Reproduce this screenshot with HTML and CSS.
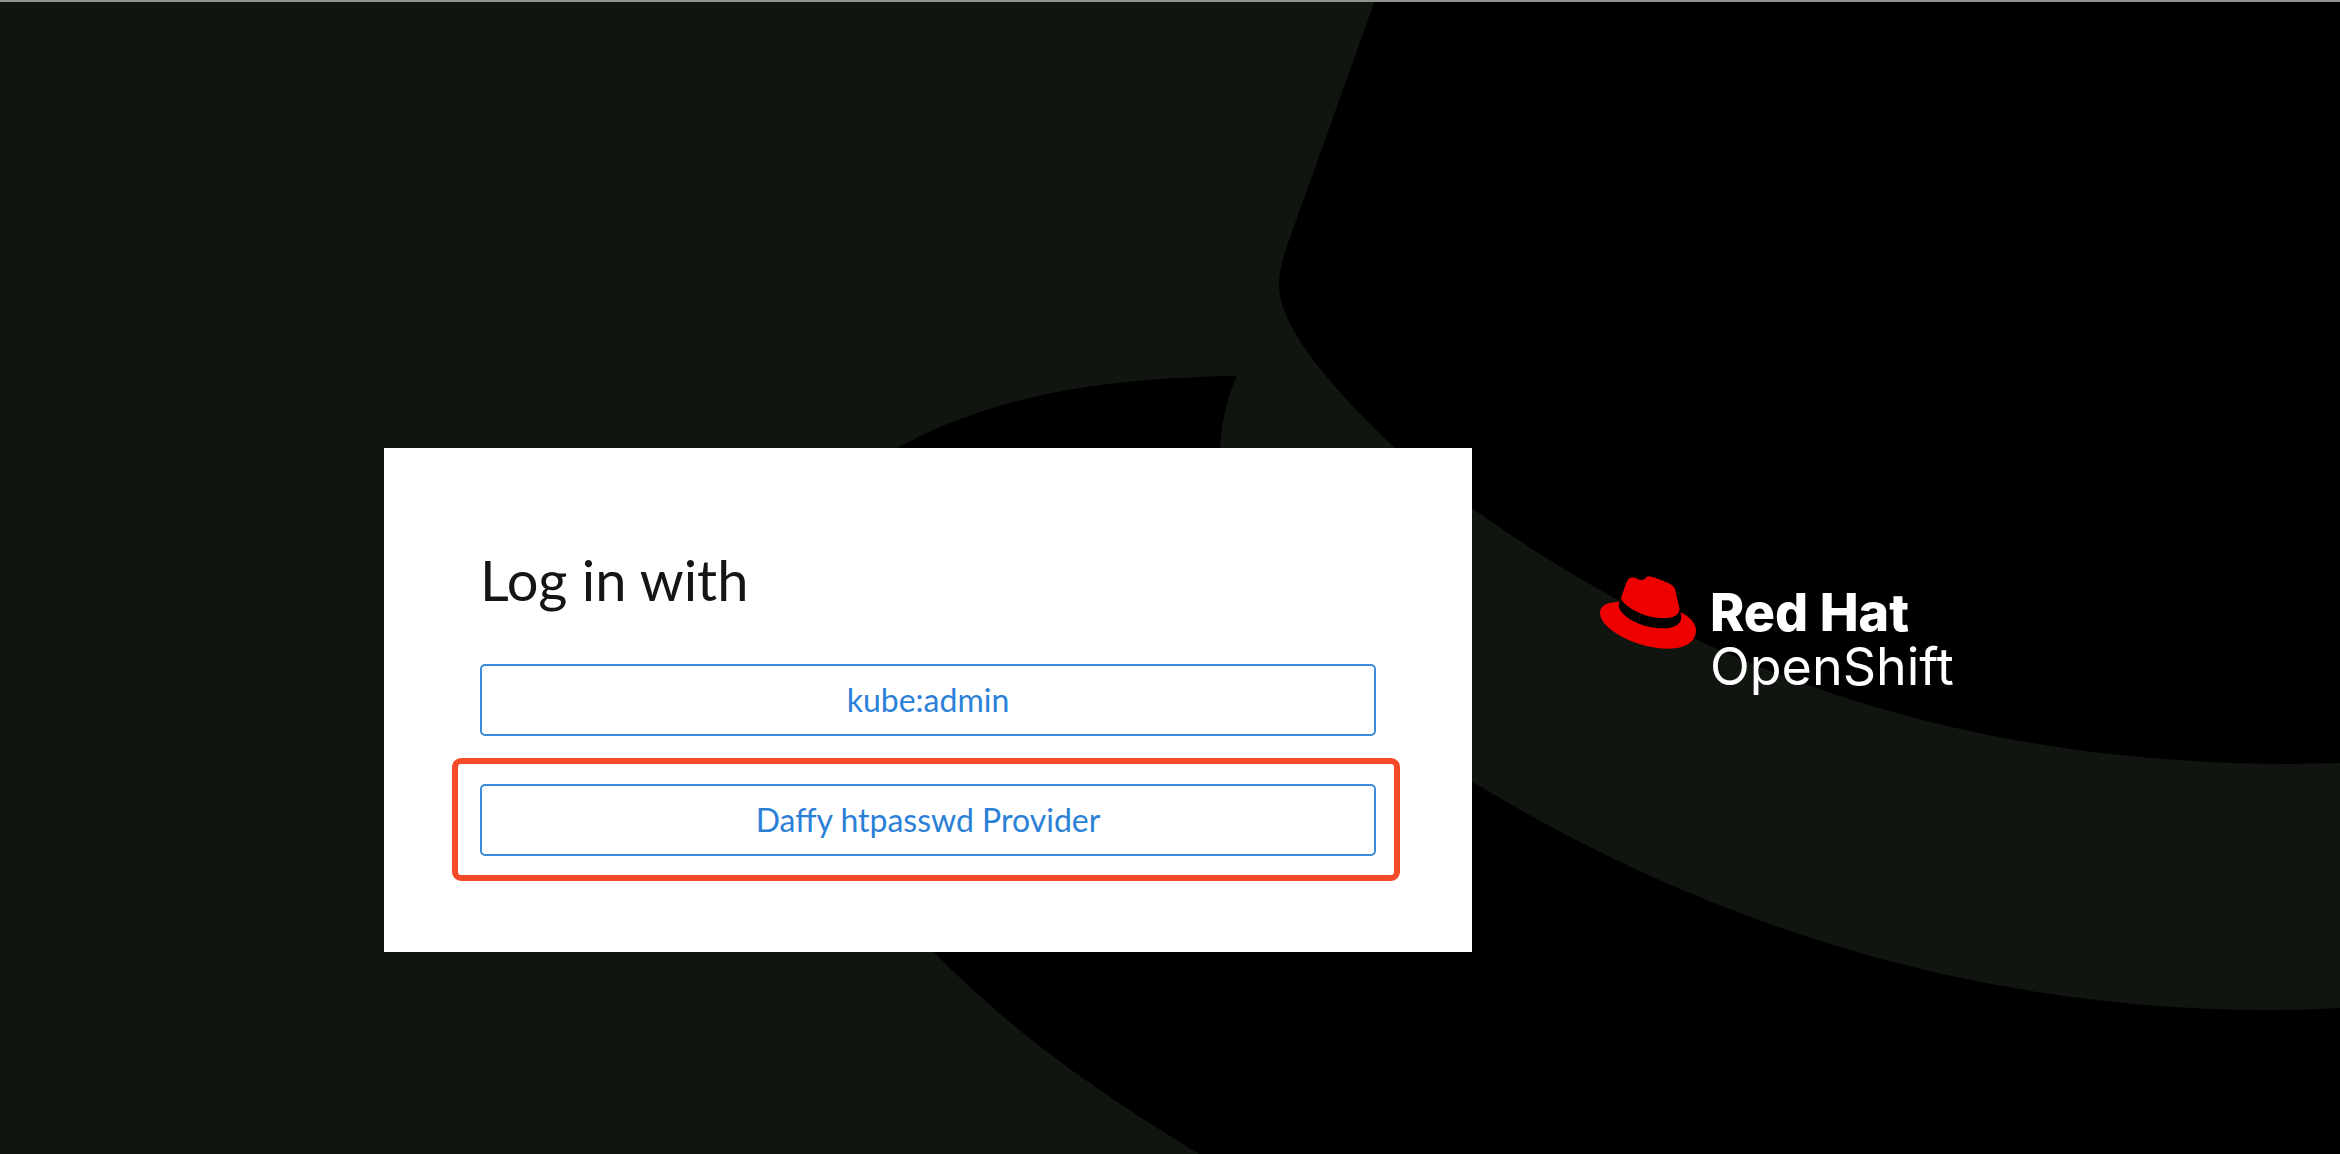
FILE: index.html
```html
<!DOCTYPE html>
<html lang="en">
<head>
  <meta charset="utf-8">
  <meta name="viewport" content="width=device-width, initial-scale=1">
  <title>Log in - Red Hat OpenShift</title>
  <link rel="stylesheet" href="styles.css">
</head>
<body>
  <svg class="backdrop" viewBox="0 0 2340 1154" preserveAspectRatio="xMidYMid slice" aria-hidden="true">
    <path d="M1375 0 L1287 246 Q1279 268 1279 285 C1279 320 1315 372 1394 447 Q1432 480 1473 509 C1700 670 1960 764 2290 764 L2340 763 V0 Z"/>
    <path d="M1237 376 C1080 378 983 402 897 448 L800 560 L820 820 L934 952 C1010 1030 1090 1087 1199 1154 H2340 V1008 Q2304 1010 2268 1010 C1968 1010 1698 920 1473 782 L1220 560 V447 Q1223 405 1237 376 Z"/>
  </svg>

  <main class="login">
    <section class="card" aria-labelledby="login-title">
      <h1 class="card-title" id="login-title">Log in with</h1>
      <ul class="providers">
        <li><button class="provider" type="button">kube:admin</button></li>
        <li class="highlighted"><button class="provider" type="button">Daffy htpasswd Provider</button></li>
      </ul>
    </section>

    <header class="brand">
      <svg class="brand-hat" viewBox="0 2.92 24 18.16" aria-hidden="true">
        <path fill="#000" d="M5.29 8.39 L5.01 9.31 A2.33 2.33 0 0 0 4.67 10.23 C4.67 12.52 9.83 15.98 15.73 15.98 C18.35 15.98 20.33 15 20.33 13.23 C20.33 13.1 20.33 12.99 20.11 11.95 L19.83 10.76 Z"/>
        <path fill="#e00" d="M16.009 13.386c1.577 0 3.86-.326 3.86-2.202a1.765 1.765 0 0 0-.04-.431l-.94-4.08c-.216-.898-.406-1.305-1.982-2.093-1.223-.625-3.888-1.658-4.676-1.658-.733 0-.947.946-1.822.946-.842 0-1.467-.706-2.255-.706-.757 0-1.25.515-1.63 1.576 0 0-1.06 2.99-1.197 3.424a.81.81 0 0 0-.028.245c0 1.162 4.577 4.974 10.71 4.974m4.101-1.435c.218 1.032.218 1.14.218 1.277 0 1.765-1.984 2.745-4.593 2.745-5.895.004-11.06-3.451-11.06-5.734a2.326 2.326 0 0 1 .19-.925C2.746 9.415 0 9.794 0 12.217c0 3.969 9.405 8.861 16.851 8.861 5.71 0 7.149-2.582 7.149-4.62 0-1.605-1.387-3.425-3.887-4.512"/>
      </svg>
      <p class="brand-name"><strong>Red Hat</strong><span>OpenShift</span></p>
    </header>
  </main>
</body>
</html>
```
FILE: styles.css
```css
:root {
  --ground: #10150f;
  --link: #3a8bdc;
  --mark: #f54a27;
}

* {
  box-sizing: border-box;
}

body {
  margin: 0;
  min-height: 100vh;
  border-top: 2px solid #8f9691;
  background: var(--ground);
  font-family: Lato, "Liberation Sans", sans-serif;
}

.backdrop {
  position: absolute;
  inset: 0;
  z-index: -1;
  width: 100%;
  height: 100%;
}

.login {
  display: grid;
  grid-template-columns: minmax(0, 1088px) minmax(0, 1fr);
  align-items: start;
  gap: 128px;
  padding: 446px 384px 96px;
}

.card {
  padding: 96px;
  background: #fff;
}

.card-title {
  margin: 0 0 48px;
  color: #151515;
  font-size: 56px;
  font-weight: 400;
  line-height: 72px;
}

.providers {
  display: grid;
  gap: 48px;
  margin: 0;
  padding: 0;
  list-style: none;
}

.highlighted {
  position: relative;
}

/* Frame drawn around the provider to choose. */
.highlighted::after {
  content: "";
  position: absolute;
  inset: -26px -24px -25px -28px;
  border: 6px solid var(--mark);
  border-radius: 9px;
  pointer-events: none;
}

.provider {
  display: block;
  width: 100%;
  height: 72px;
  padding: 0 16px;
  border: 2px solid var(--link);
  border-radius: 5px;
  background: #fff;
  color: #2b80d8;
  font-family: inherit;
  font-size: 32px;
  line-height: 40px;
  cursor: pointer;
}

.brand {
  display: flex;
  align-items: flex-start;
  gap: 14px;
  padding-top: 128px;
}

.brand-hat {
  flex: none;
  width: 96px;
  height: 73px;
}

.brand-name {
  display: grid;
  margin: 0;
  padding-top: 10px;
  color: #fff;
  font-family: Inter, "Liberation Sans", sans-serif;
  font-size: 52px;
  line-height: 54px;
}

.brand-name strong {
  font-weight: 800;
}

@media (max-width: 1400px) {
  .login {
    grid-template-columns: minmax(0, 1fr);
    gap: 32px;
    padding: 96px 48px;
  }

  .brand {
    grid-row: 1;
    padding-top: 0;
  }
}
```
